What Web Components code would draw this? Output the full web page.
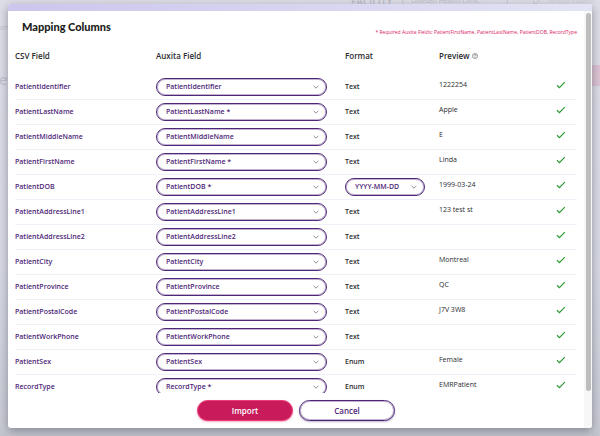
<!DOCTYPE html>
<html lang="en">
<head>
<meta charset="utf-8">
<title>Mapping Columns</title>
<style>
html, body { margin: 0; height: 100%; }
body { font-family: "Open Sans", "Noto Sans", sans-serif; font-size: 7px; line-height: 10px; color: #2b2b2f; overflow: hidden; }
</style>
</head>
<body>
<app-backdrop>
  <mapping-dialog heading="Mapping Columns" note="* Required Auxita Fields: PatientFirstName, PatientLastName, PatientDOB, RecordType">
    <mapping-table></mapping-table>
    <pill-button slot="actions" kind="primary">Import</pill-button>
    <pill-button slot="actions">Cancel</pill-button>
  </mapping-dialog>
</app-backdrop>
<script>
class AppBackdrop extends HTMLElement {
  constructor() {
    super();
    this.attachShadow({ mode: 'open' }).innerHTML = `
      <style>
        :host { display: block; position: relative; box-sizing: border-box; height: 100vh; padding: 4px 8px 8px; overflow: hidden;
          background: linear-gradient(180deg, #dddee6 0, #d8dae3 60%, #c9cbd3 98%, #c2c4cb 100%); }
        .behind { position: absolute; color: #bfbecb; white-space: nowrap; }
        .facility { left: 351px; top: -4px; font-weight: 600; font-size: 10px; }
        .clinic { left: 402px; top: -4px; padding: 0 28px 0 8px; border: solid #c6c5d0; border-width: 0 1px; border-radius: 8px; }
        .search { left: 548px; top: -4px; color: #cfced6; }
        .lens { left: 532px; top: -2px; }
        .port { left: 0; top: 23px; }
        .heading { left: -1px; top: 71px; font-size: 15px; line-height: 16px; }
        .strip { right: 0; top: 65px; width: 8px; height: 21px; background: #dcc3d2; }
      </style>
      <div aria-hidden="true">
        <span class="behind facility">FACILITY</span>
        <span class="behind clinic">Dillesen Health Clinic</span>
        <svg class="behind lens" width="8" height="8" viewBox="0 0 8 8" fill="none" stroke="#cfced6"><circle cx="4" cy="3" r="2.5"/><path d="M2 5L0 7"/></svg>
        <span class="behind search">Search Patient</span>
        <span class="behind port">ort</span>
        <span class="behind heading">ev</span>
        <span class="behind strip"></span>
      </div>
      <slot></slot>`;
  }
}
customElements.define('app-backdrop', AppBackdrop);

class MappingDialog extends HTMLElement {
  connectedCallback() {
    const root = this.attachShadow({ mode: 'open' });
    root.innerHTML = `
      <style>
        :host { display: flex; flex-direction: column; position: relative; height: 100%; overflow: hidden;
          border-radius: 3px; background: #fff; box-shadow: 0 3px 10px rgba(50, 52, 70, .45); }
        .band { flex: none; height: 7px; background: linear-gradient(90deg, #cdc6ed, #e2e3f4); }
        .main { flex: 1; min-height: 0; display: flex; }
        .content { flex: 1; min-width: 0; display: flex; flex-direction: column; padding: 0 7px; }
        header { flex: none; display: flex; justify-content: space-between; align-items: flex-start; padding: 8px 0 0 7px; }
        h1 { margin: 0; font: 900 11px/16px Lato, "Open Sans", sans-serif; color: #1c1c20; }
        p { margin: 0; padding-top: 9px; font-size: 5px; line-height: 8px; color: #d81b60; }
        .scroll { flex: 1; min-height: 0; overflow: hidden; }
        footer { flex: none; display: flex; justify-content: center; gap: 6px; padding: 7px 0; }
        .track { flex: none; width: 8px; background: #f7f7f7; display: flex; justify-content: center; padding: 2px 0 37px; box-sizing: border-box; }
        .thumb { width: 5px; border-radius: 3px; background: #bdbdbd; }
      </style>
      <div class="band"></div>
      <div class="main">
        <div class="content">
          <header><h1></h1><p></p></header>
          <div class="scroll"><slot></slot></div>
          <footer><slot name="actions"></slot></footer>
        </div>
        <div class="track"><div class="thumb"></div></div>
      </div>`;
    this.setAttribute('role', 'dialog');
    root.querySelector('h1').textContent = this.getAttribute('heading');
    root.querySelector('p').textContent = this.getAttribute('note');
  }
}
customElements.define('mapping-dialog', MappingDialog);

class PillButton extends HTMLElement {
  constructor() {
    super();
    this.attachShadow({ mode: 'open' }).innerHTML = `
      <style>
        :host { display: block; }
        button { box-sizing: border-box; width: 96px; height: 21px; padding: 0; border: 1px solid #4f2778; border-radius: 11px;
          background: #fff; color: #4f2778; font: 600 8px/10px "Open Sans", "Noto Sans", sans-serif;
          box-shadow: inset 0 0 0 1px rgba(79, 39, 120, .35), 0 1px 2px rgba(75, 37, 111, .35); }
        :host([kind="primary"]) button { background: #c91a5b; border-color: #ee3a77; color: #fff; box-shadow: 0 1px 2px rgba(201, 26, 91, .35); }
      </style>
      <button type="button"><slot></slot></button>`;
  }
}
customElements.define('pill-button', PillButton);

class PillSelect extends HTMLElement {
  connectedCallback() {
    const root = this.attachShadow({ mode: 'open' });
    root.innerHTML = `
      <style>
        :host { display: grid; align-items: center; }
        select, svg { grid-area: 1 / 1; }
        select { appearance: none; box-sizing: border-box; width: 100%; height: 18px; margin: 0; padding: 0 18px 0 9px;
          border: 1px solid #4f2778; border-radius: 9px; background: #fff; color: #4f2778;
          font: 600 7px/10px "Open Sans", "Noto Sans", sans-serif; box-shadow: inset 0 0 0 1px rgba(79, 39, 120, .35); }
        svg { justify-self: end; margin-right: 8px; width: 6px; height: 6px; pointer-events: none; }
      </style>
      <select><option></option></select>
      <svg viewBox="0 0 6 6" fill="none" stroke="#77727f" stroke-width=".8" aria-hidden="true"><path d="M.6 1.8L3 4.2l2.4-2.4"/></svg>`;
    root.querySelector('option').textContent = this.getAttribute('value');
    root.querySelector('select').setAttribute('aria-label', this.getAttribute('label'));
  }
}
customElements.define('pill-select', PillSelect);

class CheckMark extends HTMLElement {
  constructor() {
    super();
    this.attachShadow({ mode: 'open' }).innerHTML = `
      <style>:host { display: block; width: 10px; height: 8px; } svg { display: block; }</style>
      <svg width="10" height="8" viewBox="0 0 10 8" fill="none" stroke="#2a9a32" stroke-width="1.2" role="img" aria-label="Mapped"><path d="M1 4.3l2.4 2.3L8.8 1.2"/></svg>`;
  }
}
customElements.define('check-mark', CheckMark);

class MappingTable extends HTMLElement {
  connectedCallback() {
    const rows = [
      ['PatientIdentifier', '', 'Text', '1222254'],
      ['PatientLastName', ' *', 'Text', 'Apple'],
      ['PatientMiddleName', '', 'Text', 'E'],
      ['PatientFirstName', ' *', 'Text', 'Linda'],
      ['PatientDOB', ' *', 'YYYY-MM-DD', '1999-03-24'],
      ['PatientAddressLine1', '', 'Text', '123 test st'],
      ['PatientAddressLine2', '', 'Text', ''],
      ['PatientCity', '', 'Text', 'Montreal'],
      ['PatientProvince', '', 'Text', 'QC'],
      ['PatientPostalCode', '', 'Text', 'J7V 3W8'],
      ['PatientWorkPhone', '', 'Text', ''],
      ['PatientSex', '', 'Enum', 'Female'],
      ['RecordType', ' *', 'Enum', 'EMRPatient'],
    ];
    const body = rows.map(([name, mark, format, preview]) => `
      <tr>
        <th scope="row">${name}</th>
        <td class="field"><pill-select label="Auxita field for ${name}" value="${name}${mark}"></pill-select></td>
        <td class="format">${format.startsWith('YYYY') ? `<pill-select class="date" label="Format of ${name}" value="${format}"></pill-select>` : format}</td>
        <td class="preview">${preview}</td>
        <td class="state"><check-mark></check-mark></td>
      </tr>`).join('');
    this.attachShadow({ mode: 'open' }).innerHTML = `
      <style>
        :host { display: block; }
        table { width: 100%; table-layout: fixed; border-collapse: separate; border-spacing: 0; }
        th, td { padding: 0; text-align: left; vertical-align: middle; box-sizing: border-box; }
        thead th { height: 39px; padding-top: 14px; vertical-align: top; font-size: 8px; line-height: 12px; font-weight: 600; }
        thead svg { vertical-align: 0; margin-left: 2px; }
        tbody th, tbody td { height: 25px; border-bottom: 1px solid #f0f0f8; }
        tbody th { color: #4f2778; font-weight: 600; }
        tbody td.field { padding-right: 18px; }
        .format { font-weight: 600; }
        .date { width: 80px; }
        tbody td.preview, tbody td.state { padding-bottom: 4px; }
      </style>
      <table>
        <colgroup><col style="width:141px"><col><col style="width:94px"><col style="width:117px"><col style="width:21px"></colgroup>
        <thead><tr>
          <th scope="col">CSV Field</th><th scope="col">Auxita Field</th><th scope="col">Format</th>
          <th scope="col">Preview<svg width="6" height="6" viewBox="0 0 6 6" fill="none" stroke="#55555c" stroke-width=".6" role="img" aria-label="Help"><circle cx="3" cy="3" r="2.5"/><path d="M2.2 2.4c0-1 1.6-1 1.6 0 0 .6-.8.5-.8 1.2M3 4.1v.5"/></svg></th>
          <td></td>
        </tr></thead>
        <tbody>${body}</tbody>
      </table>`;
  }
}
customElements.define('mapping-table', MappingTable);
</script>
</body>
</html>
